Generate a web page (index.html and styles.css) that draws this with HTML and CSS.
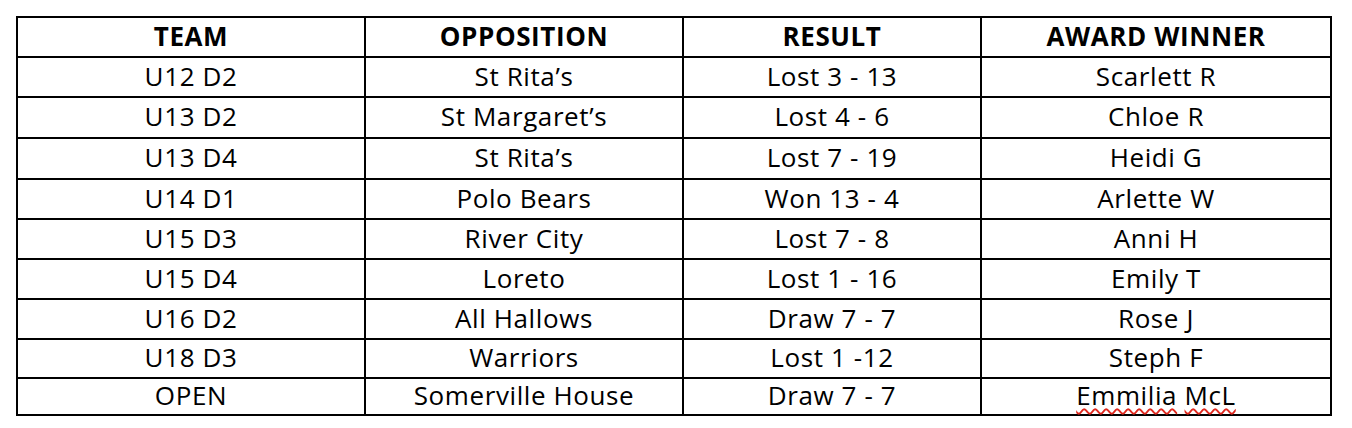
FILE: index.html
```html
<!DOCTYPE html>
<html>
<head>
<meta charset="utf-8">
<link rel="stylesheet" href="styles.css">
</head>
<body>
<table class="results">
  <colgroup>
    <col class="c-team">
    <col class="c-opp">
    <col class="c-res">
    <col class="c-award">
  </colgroup>
  <tr class="head r0"><th>TEAM</th><th>OPPOSITION</th><th>RESULT</th><th>AWARD WINNER</th></tr>
  <tr class="r1"><td>U12 D2</td><td>St Rita’s</td><td>Lost 3 - 13</td><td>Scarlett R</td></tr>
  <tr class="r2"><td>U13 D2</td><td>St Margaret’s</td><td>Lost 4 - 6</td><td>Chloe R</td></tr>
  <tr class="r3"><td>U13 D4</td><td>St Rita’s</td><td>Lost 7 - 19</td><td>Heidi G</td></tr>
  <tr class="r4"><td>U14 D1</td><td>Polo Bears</td><td>Won 13 - 4</td><td>Arlette W</td></tr>
  <tr class="r5"><td>U15 D3</td><td>River City</td><td>Lost 7 - 8</td><td>Anni H</td></tr>
  <tr class="r6"><td>U15 D4</td><td>Loreto</td><td>Lost 1 - 16</td><td>Emily T</td></tr>
  <tr class="r7"><td>U16 D2</td><td>All Hallows</td><td>Draw 7 - 7</td><td>Rose J</td></tr>
  <tr class="r8"><td>U18 D3</td><td>Warriors</td><td>Lost 1 -12</td><td>Steph F</td></tr>
  <tr class="r9"><td>OPEN</td><td>Somerville House</td><td>Draw 7 - 7</td><td><span class="spell">Emmilia</span> <span class="spell">McL</span></td></tr>
</table>
</body>
</html>
```
FILE: styles.css
```css
html, body {
  margin: 0;
  padding: 0;
  background: #fff;
}
body {
  padding: 16px 0 0 16px;
}
.results {
  border-collapse: collapse;
  table-layout: fixed;
  width: 1316px;
  font-family: "Open Sans", Lato, "Liberation Sans", sans-serif;
  font-size: 26px;
  letter-spacing: 0.6px;
  color: #000;
}
.c-team { width: 348px; }
.c-opp { width: 318px; }
.c-res { width: 298px; }
.c-award { width: 350px; }
.results th, .results td {
  border: 2px solid #000;
  padding: 0 0 3px 0;
  text-align: center;
  vertical-align: middle;
  line-height: 1;
}
.results th {
  font-weight: 700;
}
.r0 { height: 40px; }
.r1 { height: 40px; }
.r2 { height: 41px; }
.r3 { height: 41px; }
.r4, .r5, .r6, .r7 { height: 40px; }
.r8 { height: 39px; }
.r9 { height: 37px; }
.spell {
  text-decoration: underline wavy #e0281e;
  text-decoration-thickness: 1.5px;
  text-underline-offset: 3px;
}
```
